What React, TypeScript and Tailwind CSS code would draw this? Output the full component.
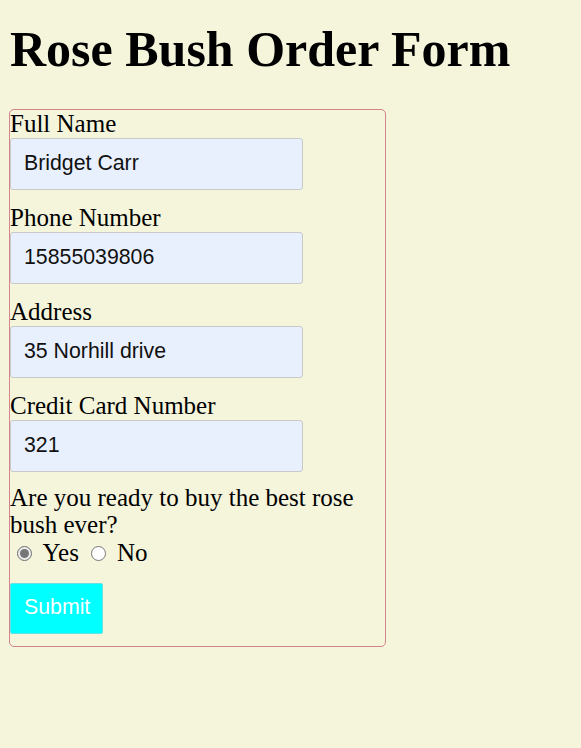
import React from "react";

const serif = { fontFamily: '"Liberation Serif", "Times New Roman", serif' };

function Field({ label, value, last }: { label: string; value: string; last?: boolean }) {
  return (
    <div className={last ? "mb-[12px]" : "mb-[14.3px]"}>
      <div className="text-[25px] leading-[27.7px] text-black">{label}</div>
      <div className="w-[293px] h-[52px] bg-[#e8f0fe] border border-[#c9c9c9] rounded-[3px] flex items-center pl-[13px] text-[21.3px] text-[#111] font-['Liberation_Sans',Arial,sans-serif]">
        {value}
      </div>
    </div>
  );
}

export default function App() {
  return (
    <div className="min-h-[748px] bg-[#f5f5dc] pl-[9px] pt-[22px]" style={serif}>
      <h1 className="text-[50px] font-bold leading-[54.8px] text-black mb-[32px] pl-[1px]">
        Rose Bush Order Form
      </h1>
      <div className="w-[377px] border border-[#d4848c] rounded-[5px] pb-[12px]">
        <Field label="Full Name" value="Bridget Carr" />
        <Field label="Phone Number" value="15855039806" />
        <Field label="Address" value="35 Norhill drive" />
        <Field label="Credit Card Number" value="321" last />
        <div className="text-[25px] leading-[27.7px] text-black">
          Are you ready to buy the best rose bush ever?
        </div>
        <div className="flex items-center h-[27.7px] text-[25px] leading-[27.7px] text-black">
          <span className="ml-[6.5px] mt-[2px] w-[15px] h-[15px] rounded-full border border-[#6e6e6e] bg-[#ededed] flex items-center justify-center">
            <span className="w-[9px] h-[9px] rounded-full bg-[#767676]" />
          </span>
          <span className="ml-[11px]">Yes</span>
          <span className="ml-[12px] mt-[2px] w-[15px] h-[15px] rounded-full border border-[#767676] bg-white" />
          <span className="ml-[11px]">No</span>
        </div>
        <div className="mt-[16px] w-[93px] h-[51px] bg-[#00ffff] border border-[#66e0e6] rounded-[2px] flex items-center pl-[13px] text-[21.3px] text-white font-['Liberation_Sans',Arial,sans-serif]">
          Submit
        </div>
      </div>
    </div>
  );
}
